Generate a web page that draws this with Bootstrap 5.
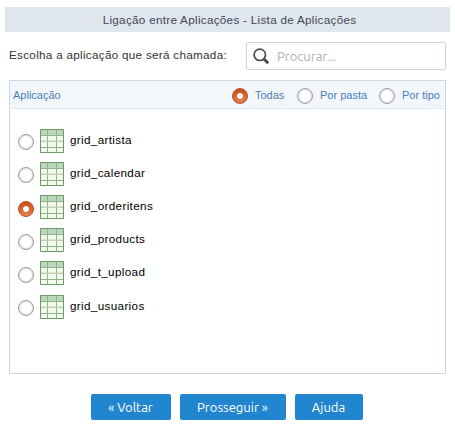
<!DOCTYPE html>
<html lang="pt-BR">
<head>
<meta charset="utf-8">
<title>Ligação entre Aplicações</title>
<link href="https://cdn.jsdelivr.net/npm/bootstrap@5.3.0/dist/css/bootstrap.min.css" rel="stylesheet">
<style>
body{font-family:"Liberation Sans",Arial,sans-serif;font-size:11.7px;line-height:14px;color:#333;background:#fff;padding:7px 5px 0;height:430px;overflow:hidden}
.title-bar{height:25px;background:#dfe6ee;color:#3f4857;padding:1px 0 0 4px;letter-spacing:.29px}
.search-row{margin:10px 4px 0;height:28px}
.prompt{color:#333;padding-top:6px;letter-spacing:.29px}
.search-box{width:200px;height:28px;border:1px solid #c9d8e1;border-radius:2px;padding-left:6px;gap:8px}
.search-box input{font:13px/18px Ubuntu,"Noto Sans",sans-serif;color:#555;outline:0;width:150px}
.search-box input::placeholder{color:#a9b1b6;opacity:1}
.panel{margin:10px 4px 0;height:294px;border:1px solid #cbd7df}
.panel-head{height:28px;background:#f3f7fc;border-bottom:1px solid #e1e9f0;color:#4680b8;font-size:11px;padding-left:3px}
.filters{padding-top:3px}
.f1{width:65px}.f2{width:82px}.f3{width:66px}
.filter-text{border-bottom:1px solid #e4ebf2;padding:0 3px;height:18px;margin:2px 0 0 4px;line-height:14px;white-space:nowrap}
.radio{appearance:none;flex:none;width:16px;height:16px;margin:0;border:1px solid #9b9b9b;border-radius:50%;background:#fff;box-shadow:inset 0 0 1px 1px #dedede}
.radio:checked{border-color:#b84e25;box-shadow:none;background:radial-gradient(circle,#fff 0 2.5px,transparent 3.3px),linear-gradient(#cf4d1c,#e57f50)}
.app-list{padding:20px 0 0 8px}
.app-row{height:33px}
.app-row:last-child{margin-top:1px}
.app-row .radio{margin-top:5px}
.app-row:nth-child(n+3) .radio{margin-top:6px}
.app-row:last-child .radio{margin-top:5px}
.grid-icon{width:24px;height:24px;margin-left:6px}
.app-name{color:#000;margin:4px 0 0 6px;letter-spacing:.34px}
.actions{margin:20px 2px 0 0;gap:9px}
.action{height:26px;padding:0;border:0;border-radius:2px;background:#2185d0;color:#fff;font:13px/26px Ubuntu,"Noto Sans",sans-serif}
.back{width:80px}.next{width:106px}.help{width:68px}
</style>
<script src="https://cdn.jsdelivr.net/npm/bootstrap@5.3.0/dist/js/bootstrap.bundle.min.js"></script>
</head>
<body>
<svg class="d-none"><symbol id="sheet" viewBox="0 0 24 24"><path fill="#f4f9ee" d="M0 0h24v24H0z"/><path fill="#bcd6bd" d="M1 1h22v5H1z"/><path fill="none" stroke="#8fb487" d="M1 6.5h22M1 18.5h22M7.5 1v22M16.5 1v22"/><path fill="#c3d0b6" d="M1 11.5h22v1.5H1z"/><path fill="none" stroke="#6b9964" d="M.5.5h23v23H.5z"/></symbol></svg>
<header class="title-bar d-flex align-items-center justify-content-center">Ligação entre Aplicações - Lista de Aplicações</header>
<div class="search-row d-flex justify-content-between">
<label class="prompt" for="q">Escolha a aplicação que será chamada:</label>
<div class="search-box d-flex align-items-center">
<svg width="16" height="17" viewBox="0 0 16 17" fill="none" stroke="#494949"><circle cx="6.8" cy="6.8" r="5.7" stroke-width="1.7"/><path stroke-width="2.8" d="m11 11 4.2 4.3"/></svg>
<input id="q" class="border-0 p-0 bg-transparent" placeholder="Procurar...">
</div></div>
<main class="panel">
<div class="panel-head d-flex align-items-center"><span>Aplicação</span>
<div class="d-flex align-items-center ms-auto filters">
<label class="d-flex align-items-center f1"><input class="radio" type="radio" name="f" checked><span class="filter-text">Todas</span></label>
<label class="d-flex align-items-center f2"><input class="radio" type="radio" name="f"><span class="filter-text">Por pasta</span></label>
<label class="d-flex align-items-center f3"><input class="radio" type="radio" name="f"><span class="filter-text">Por tipo</span></label>
</div></div>
<div class="app-list">
<label class="app-row d-flex align-items-start"><input class="radio" type="radio" name="a"><svg class="grid-icon"><use href="#sheet"/></svg><span class="app-name">grid_artista</span></label>
<label class="app-row d-flex align-items-start"><input class="radio" type="radio" name="a"><svg class="grid-icon"><use href="#sheet"/></svg><span class="app-name">grid_calendar</span></label>
<label class="app-row d-flex align-items-start"><input class="radio" type="radio" name="a" checked><svg class="grid-icon"><use href="#sheet"/></svg><span class="app-name">grid_orderitens</span></label>
<label class="app-row d-flex align-items-start"><input class="radio" type="radio" name="a"><svg class="grid-icon"><use href="#sheet"/></svg><span class="app-name">grid_products</span></label>
<label class="app-row d-flex align-items-start"><input class="radio" type="radio" name="a"><svg class="grid-icon"><use href="#sheet"/></svg><span class="app-name">grid_t_upload</span></label>
<label class="app-row d-flex align-items-start"><input class="radio" type="radio" name="a"><svg class="grid-icon"><use href="#sheet"/></svg><span class="app-name">grid_usuarios</span></label>
</div></main>
<footer class="actions d-flex justify-content-center"><button class="action back btn">« Voltar</button><button class="action next btn">Prosseguir »</button><button class="action help btn">Ajuda</button></footer>
</body>
</html>
